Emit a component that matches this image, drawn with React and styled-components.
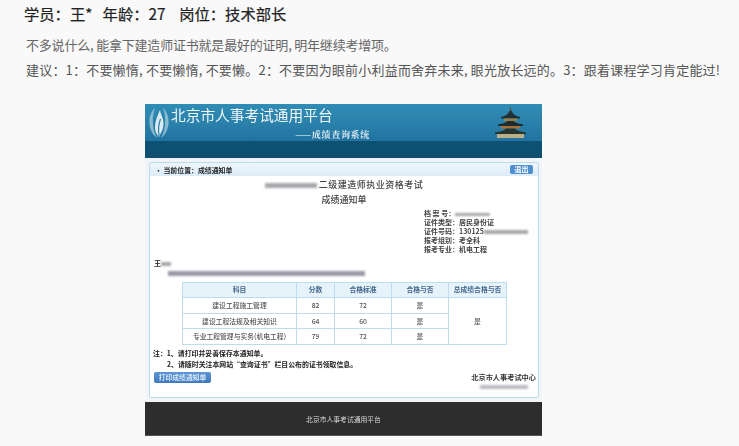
import React from "react";
import styled, { createGlobalStyle } from "styled-components";

const Global = createGlobalStyle`
  html, body { margin: 0; padding: 0; background: #f9f9f9; }
  body { font-family: "Noto Sans CJK SC", "Noto Sans", sans-serif; overflow: hidden; }
`;
const Page = styled.div`
  width: 739px; height: 446px; overflow: hidden; display: flex; flex-direction: column;
  padding: 0 0 0 24px; box-sizing: border-box;
`;
const Title = styled.h1`
  margin: 2px 0 0; font-size: 15.3px; line-height: 22px; font-weight: 400; color: #222; -webkit-text-stroke: 0.2px #222;
`;
const Para = styled.p`
  margin: ${p => p.$top}px 0 0 2px; font-size: 13px; line-height: 20px; color: ${p => p.$color};
  letter-spacing: ${p => p.$ls}px; white-space: nowrap; font-weight: 400;
`;
const ShotWrap = styled.div`
  margin: 24px 0 0 121px; width: 397px; height: 332px; display: flex; flex-direction: column;
  background: #f2f5f7; filter: blur(0.6px); flex: none;
`;
const Banner = styled.header`
  height: 37px; flex: none; display: flex; justify-content: space-between; padding: 0 15px 0 3px;
  background: linear-gradient(#2f8cb5, #2c84ad 40%, #2173a0);
  color: #fff; box-sizing: border-box;
`;
const BannerBand = styled.div`height: 17px; flex: none; background: linear-gradient(#0d5273, #0f4f70);`;
const BrandRow = styled.div`display: flex; gap: 1px;`;
const BrandText = styled.div`display: flex; flex-direction: column; width: 199px;`;
const BrandName = styled.div`font-size: 14.7px; line-height: 22px; font-weight: 400; color: #f1f7fa; white-space: nowrap;`;
const BrandSub = styled.div`
  align-self: flex-end; margin-top: 3px; font-size: 9px; line-height: 12px; font-weight: 700; letter-spacing: 0.7px;
  font-family: "Noto Serif CJK SC", "Noto Sans CJK SC", serif; color: #dcebf2; white-space: nowrap;
`;
const Panel = styled.section`
  margin: 4px 3px 4px 4px; height: 236px; flex: none; box-sizing: border-box; background: #fff;
  border: 1px solid #b9dcee; border-radius: 2px; display: flex; flex-direction: column;
`;
const PanelHead = styled.div`
  height: 13px; flex: none; display: flex; align-items: center; justify-content: space-between;
  padding: 0 5px 0 5px; background: linear-gradient(#eef6fc, #dcecf8); font-size: 6.9px; font-weight: 700; color: #222;
`;
const Logout = styled.button`
  border: 0; padding: 0; width: 23px; height: 9px; border-radius: 2px; background: #4f8fce; color: #fff;
  font: 700 7px "Noto Sans CJK SC", sans-serif; line-height: 9px;
`;
const Head1 = styled.div`
  margin-top: 1px; text-align: center; font-size: 9px; line-height: 15px; font-weight: 500; color: #444; letter-spacing: 0.5px;
`;
const Head2 = styled(Head1)`margin-top: 0; letter-spacing: 0;`;
const Smudge = styled.span`
  display: inline-block; width: ${p => p.$w}px; height: ${p => p.$h || 5}px; background: ${p => p.$c || "#a9a6ab"};
  filter: blur(1px); vertical-align: middle; margin: ${p => p.$m || 0};
`;
const Meta = styled.div`
  margin: 2px 0 0 274px; display: flex; flex-direction: column; font-size: 7px; line-height: 9px; font-weight: 700; color: #444; white-space: nowrap;
`;
const Addressee = styled.div`margin: 5px 0 0 4px; font-size: 7px; line-height: 9px; font-weight: 700; color: #222;`;
const Blurb = styled.div`margin: -1.5px 0 0 18px; height: 8px; line-height: 8px;`;
const Table = styled.table`
  margin: 7px 0 0 32px; width: 324px; flex: none; border-collapse: collapse; table-layout: fixed;
  font-size: 6.8px; color: #555; text-align: center;
`;
const Th = styled.th`
  height: 14.6px; padding: 0; border: 1px solid #bcdcef; background: #e6f3fb; font-weight: 700; color: #44678a; line-height: 1;
`;
const Td = styled.td`
  height: 14.6px; padding: 0; border: 1px solid #bcdcef; line-height: 1; font-weight: 500;
`;
const Notes = styled.div`
  margin: 3px 0 0 3px; font-size: 6.9px; line-height: 11px; font-weight: 700; color: #222; white-space: nowrap;
`;
const NoteIndent = styled.div`padding-left: 14px;`;
const Bottom = styled.div`
  margin: 2px 2px 0 4px; display: flex; justify-content: space-between; align-items: flex-start;
`;
const PrintBtn = styled.button`
  margin-top: 0.5px; border: 0; padding: 0; width: 57px; height: 11px; border-radius: 2px; background: linear-gradient(#5b95d6, #3f79bb);
  color: #dbe9f7; font: 700 6.8px "Noto Sans CJK SC", sans-serif; line-height: 11px;
`;
const Org = styled.div`
  display: flex; flex-direction: column; align-items: center; gap: 2px; font-size: 7.2px; line-height: 11px; font-weight: 700; color: #333;
`;
const Footer = styled.footer`
  height: 34px; flex: none; display: flex; align-items: center; justify-content: center; background: #2d2d2d;
  color: #d9d9d9; font-size: 6.8px; border-bottom: 1px solid #555; box-sizing: border-box;
`;
const Logo = () => (
  <svg width="22" height="32" viewBox="0 0 22 32" style={{ marginTop: 2, flex: "none" }}>
    <path d="M7 2C1 7-1 19 5 28c1 1.6 2.4 2.8 4 3.5C5 25 3 13 7 2Z" fill="#c6dfeb" opacity="0.6" />
    <path d="M15 2c6 5 8 17 2 26-1 1.6-2.4 2.8-4 3.5 4-6.5 6-18.500 2-29.500Z" fill="#c6dfeb" opacity="0.6" />
    <path d="M11 31C5 25 6 17 12 4c1 6 5 10 3 18-.8 3-2.500 6-4 9Z" fill="#dcebf2" />
    <path d="M11 30c-1-7-.5-12 1.500-17" fill="none" stroke="#2a7fa8" strokeWidth="1.200" />
  </svg>
);
const Temple = () => (
  <svg width="33" height="33" viewBox="0 0 33 33" style={{ marginTop: 2, flex: "none" }}>
    <path d="M16.500 0l1.300 6h-2.600Z" fill="#4e5a4c" />
    <path d="M7 11C12 10 14 8 15.500 5h2c1.500 3 3.500 5 8.500 6v1.500H7Z" fill="#1f3036" />
    <rect x="10" y="12.500" width="13" height="2.500" fill="#9c7f44" />
    <path d="M4 18.500c6-1 8-2 9.500-3.500h6c1.500 1.500 3.500 2.500 9.500 3.500V20H4Z" fill="#1d2c30" />
    <rect x="7" y="20" width="19" height="2.500" fill="#a96f38" />
    <path d="M1 26.500c7-1 9-2 11-4h9c2 2 4 3 11 4V28H1Z" fill="#26342f" />
    <rect x="3" y="28" width="27" height="4" fill="#b9ae85" />
  </svg>
);
const rows = [
  ["建设工程施工管理", "82", "72", "是"],
  ["建设工程法规及相关知识", "64", "60", "是"],
  ["专业工程管理与实务(机电工程)", "79", "72", "是"],
];

export default function App() {
  return (
    <Page>
      <Global />
      <Title>学员：王*&nbsp;&nbsp;&nbsp;年龄：27&nbsp;&nbsp;&nbsp;&nbsp;岗位：技术部长</Title>
      <Para $top={11} $color="#666" $ls={-0.2}>不多说什么, 能拿下建造师证书就是最好的证明, 明年继续考增项。</Para>
      <Para $top={5} $color="#555" $ls={0.2}>建议：1：不要懒惰, 不要懒惰, 不要懒。2：不要因为眼前小利益而舍弃未来, 眼光放长远的。3：跟着课程学习肯定能过!</Para>
      <ShotWrap>
        <Banner>
          <BrandRow>
            <Logo />
            <BrandText>
              <BrandName>北京市人事考试通用平台</BrandName>
              <BrandSub>——成绩查询系统</BrandSub>
            </BrandText>
          </BrandRow>
          <Temple />
        </Banner>
        <BannerBand />
        <Panel>
          <PanelHead>
            <span>· 当前位置：成绩通知单</span>
            <Logout>退出</Logout>
          </PanelHead>
          <Head1><Smudge $w={52} $m="0 2px 0 0" />二级建造师执业资格考试</Head1>
          <Head2>成绩通知单</Head2>
          <Meta>
            <div>档 案 号：<Smudge $w={35} $h={3} /></div>
            <div>证件类型：居民身份证</div>
            <div>证件号码：130125<Smudge $w={44} $h={4} /></div>
            <div>报考组别：考全科</div>
            <div>报考专业：机电工程</div>
          </Meta>
          <Addressee>王<Smudge $w={10} $h={4} /></Addressee>
          <Blurb><Smudge $w={197} $h={5} $c="#9b97a6" /></Blurb>
          <Table>
            <colgroup>
              <col width="114" /><col width="38" /><col width="57" /><col width="57" /><col width="58" />
            </colgroup>
            <thead>
              <tr><Th>科目</Th><Th>分数</Th><Th>合格标准</Th><Th>合格与否</Th><Th>总成绩合格与否</Th></tr>
            </thead>
            <tbody>
              {rows.map((r, i) => (
                <tr key={r[0]}>
                  {r.map(c => <Td key={c}>{c}</Td>)}
                  {i === 0 && <Td rowSpan={3}>是</Td>}
                </tr>
              ))}
            </tbody>
          </Table>
          <Notes>
            <div>注：1、请打印并妥善保存本通知单。</div>
            <NoteIndent>2、请随时关注本网站“查询证书”栏目公布的证书领取信息。</NoteIndent>
          </Notes>
          <Bottom>
            <PrintBtn>打印成绩通知单</PrintBtn>
            <Org>
              <div>北京市人事考试中心</div>
              <Smudge $w={48} $h={4} $c="#bdbcc6" />
            </Org>
          </Bottom>
        </Panel>
        <Footer>北京市人事考试通用平台</Footer>
      </ShotWrap>
    </Page>
  );
}
